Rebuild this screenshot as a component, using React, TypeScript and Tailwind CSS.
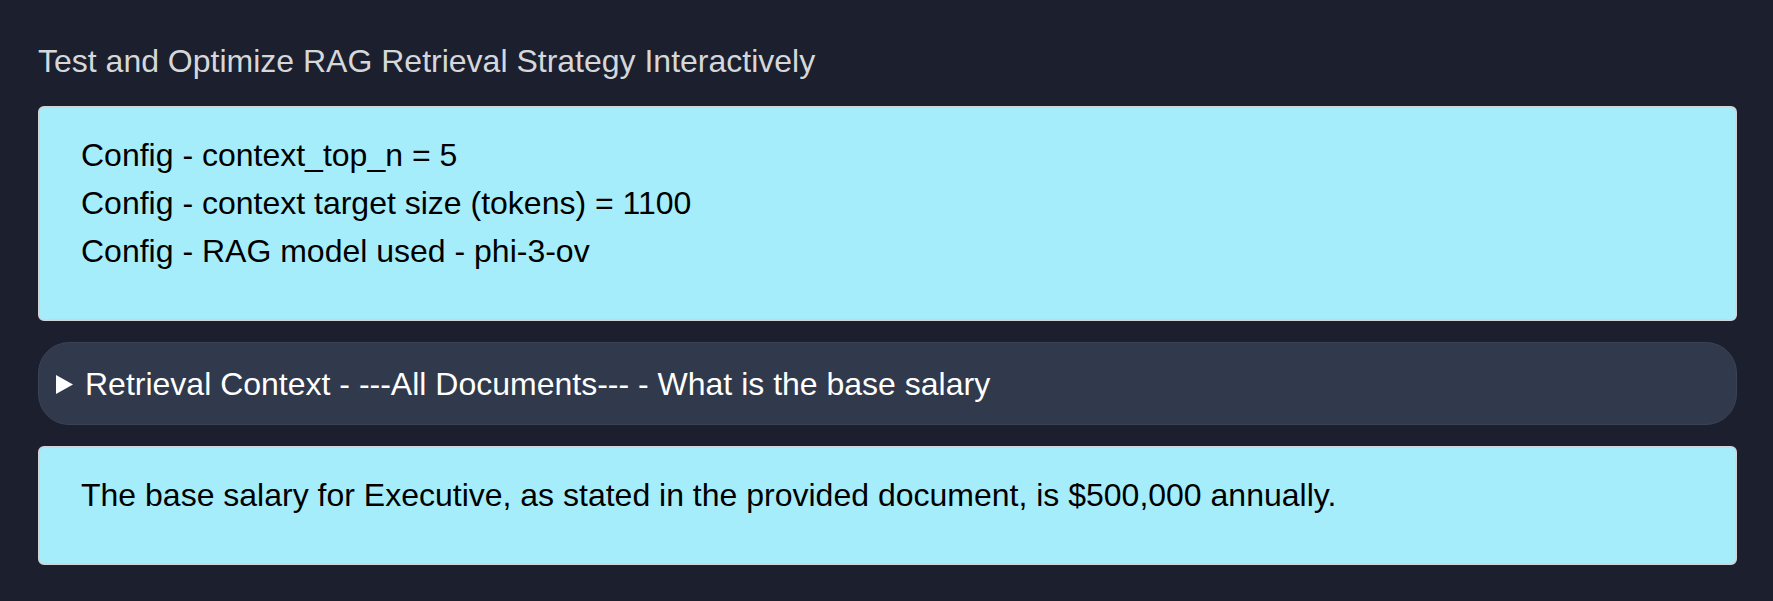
const configLines = [
  "Config - context_top_n = 5",
  "Config - context target size (tokens) = 1100",
  "Config - RAG model used - phi-3-ov",
];

const InfoBox = ({ children }: { children: React.ReactNode }) => (
  <div className="rounded-[6px] border-2 border-[#d2d4d8] bg-[#a6edfb] pl-[41px] pr-6 pt-[23px] pb-[44px] text-black">
    {children}
  </div>
);

const App = () => {
  return (
    <div
      className="min-h-[601px] bg-[#1b1f2e] pl-[38px] pr-[36px] pt-[37px] text-[32px] leading-[48px]"
      style={{ fontFamily: '"Liberation Sans", Arial, sans-serif' }}
    >
      <h1 className="mb-[21px] text-[#d6d7d9]">Test and Optimize RAG Retrieval Strategy Interactively</h1>

      <InfoBox>
        {configLines.map((line) => (
          <div key={line}>{line}</div>
        ))}
      </InfoBox>

      <div className="my-[21px] flex h-[83px] items-center gap-[12px] rounded-[31px] border border-[#3a4254] bg-[#31394d] pl-[17px] text-white">
        <svg width="17" height="19" viewBox="0 0 17 19" className="shrink-0 mt-[2px]">
          <polygon points="0,0 17,9.5 0,19" fill="white" />
        </svg>
        <span>Retrieval Context - ---All Documents--- - What is the base salary</span>
      </div>

      <InfoBox>
        <div>The base salary for Executive, as stated in the provided document, is $500,000 annually.</div>
      </InfoBox>
    </div>
  );
};

export default App;
